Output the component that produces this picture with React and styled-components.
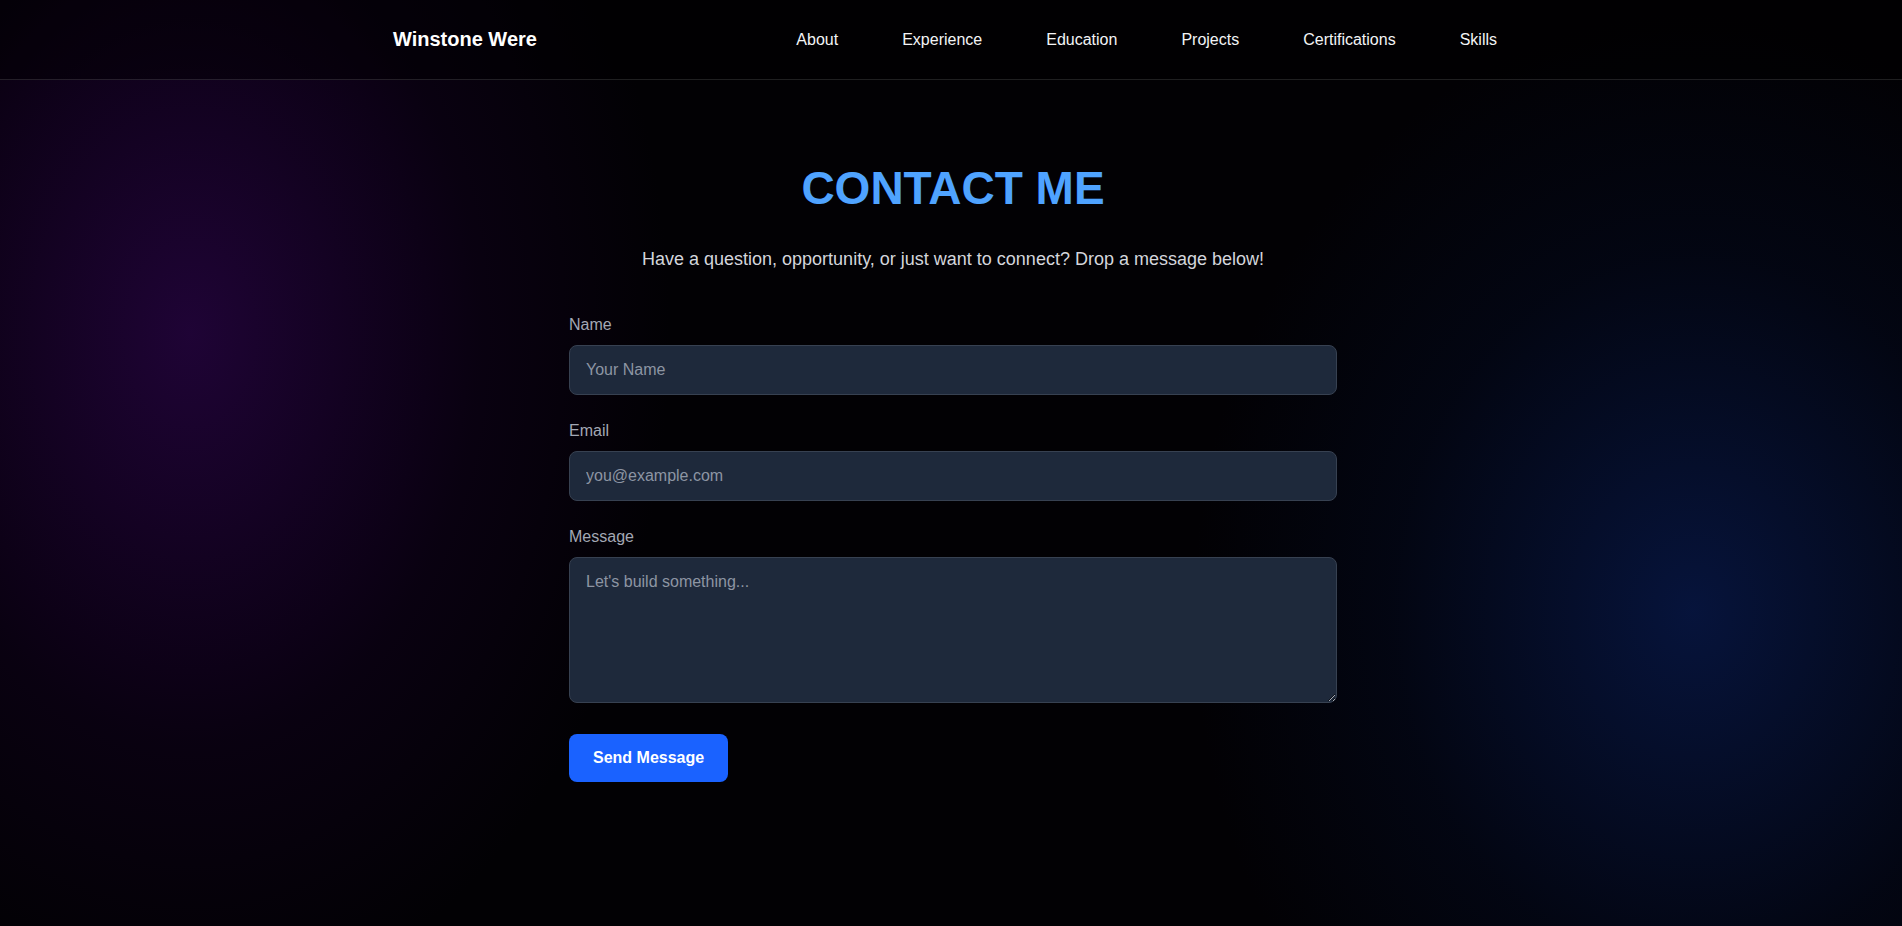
import React from 'react';
import { createGlobalStyle, styled } from 'styled-components';

const GlobalStyle = createGlobalStyle`
	* {
		box-sizing: border-box;
	}
	body {
		margin: 0;
		font-family: "Liberation Sans", Arial, sans-serif;
		background: #000;
		color: #fff;
	}
`;

const Page = styled.div`
	min-height: 100vh;
	background:
		radial-gradient(ellipse 480px 680px at 10% 36%, rgba(36, 4, 62, 0.85), rgba(18, 0, 32, 0.45) 60%, transparent 100%),
		radial-gradient(ellipse 500px 600px at 89% 66%, rgba(8, 26, 78, 0.75), rgba(4, 14, 44, 0.35) 60%, transparent 100%),
		#020104;
`;

const Header = styled.header`
	height: 80px;
	border-bottom: 1px solid rgba(255, 255, 255, 0.12);
	background: rgba(0, 0, 0, 0.45);
`;

const HeaderInner = styled.div`
	display: flex;
	align-items: center;
	justify-content: space-between;
	height: 100%;
	max-width: 1116px;
	margin: 0 auto;
	padding-right: 12px;
`;

const Brand = styled.div`
	font-size: 20px;
	font-weight: 700;
	color: #fff;
`;

const NavList = styled.ul`
	display: flex;
	gap: 64px;
	margin: 0;
	padding: 0;
	list-style: none;

	> li {
		font-size: 16px;
		line-height: 24px;
		color: #f3f4f6;
		cursor: pointer;
	}
`;

const Main = styled.main`
	display: flex;
	flex-direction: column;
	align-items: center;
	padding: 80px 0 80px 4px;
`;

const Title = styled.h1`
	margin: 0;
	font-size: 46px;
	line-height: 56px;
	font-weight: 700;
	color: #4fa3ff;
`;

const Subtitle = styled.p`
	margin: 29px 0 0;
	font-size: 18px;
	line-height: 28px;
	color: #d4d6dc;
`;

const Form = styled.form`
	width: 768px;
	margin-top: 40px;
`;

const Field = styled.div`
	margin-bottom: 24px;
`;

const Label = styled.label`
	display: block;
	margin-bottom: 8px;
	font-size: 16px;
	line-height: 24px;
	color: #a3a8b4;
`;

const fieldStyles = `
	display: block;
	width: 100%;
	padding: 12px 16px;
	font-family: "Liberation Sans", Arial, sans-serif;
	font-size: 16px;
	line-height: 24px;
	color: #fff;
	background: #1e293b;
	border: 1px solid #374151;
	border-radius: 8px;
	outline: none;

	&::placeholder {
		color: #8d95a3;
	}
`;

const Input = styled.input`
	${fieldStyles}
	height: 50px;
`;

const TextArea = styled.textarea`
	${fieldStyles}
	height: 146px;
	resize: vertical;
`;

const Button = styled.button`
	margin-top: 7px;
	padding: 12px 24px;
	font-family: "Liberation Sans", Arial, sans-serif;
	font-size: 16px;
	font-weight: 700;
	line-height: 24px;
	color: #fff;
	background: #1a62ff;
	border: none;
	border-radius: 8px;
	cursor: pointer;
	&:hover {
		background: #0f4fe0;
	}
`;

const navItems = ['About', 'Experience', 'Education', 'Projects', 'Certifications', 'Skills'];

const App = () => {
	return (
		<Page>
			<GlobalStyle />
			<Header>
				<HeaderInner>
					<Brand>Winstone Were</Brand>
					<nav>
						<NavList>
							{navItems.map((item) => (
								<li key={item}>{item}</li>
							))}
						</NavList>
					</nav>
				</HeaderInner>
			</Header>
			<Main>
				<Title>CONTACT ME</Title>
				<Subtitle>Have a question, opportunity, or just want to connect? Drop a message below!</Subtitle>
				<Form onSubmit={(e) => e.preventDefault()}>
					<Field>
						<Label htmlFor="name">Name</Label>
						<Input id="name" type="text" placeholder="Your Name" />
					</Field>
					<Field>
						<Label htmlFor="email">Email</Label>
						<Input id="email" type="email" placeholder="you@example.com" />
					</Field>
					<Field>
						<Label htmlFor="message">Message</Label>
						<TextArea id="message" placeholder="Let's build something..." />
					</Field>
					<Button type="submit">Send Message</Button>
				</Form>
			</Main>
		</Page>
	);
};

export default App;
